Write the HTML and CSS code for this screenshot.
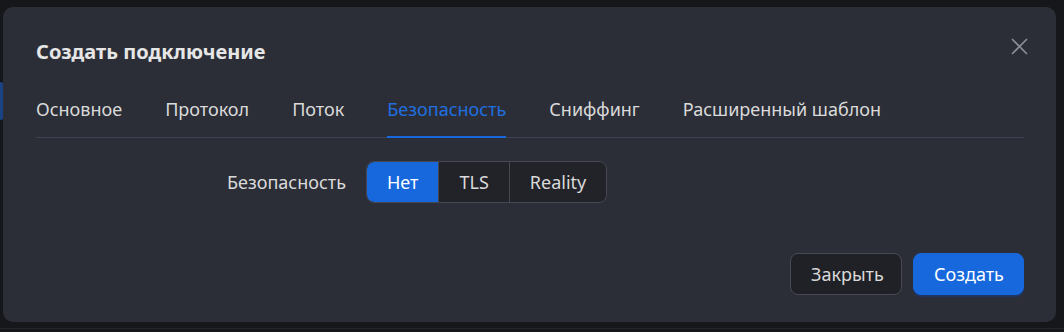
FILE: index.html
```html
<!DOCTYPE html>
<html lang="ru">
<head>
    <meta charset="UTF-8">
    <meta name="viewport" content="width=device-width, initial-scale=1.0">
    <title>Создать подключение</title>
    <link rel="stylesheet" href="styles.css">
</head>
<body>

    <div class="page-behind">
        <div class="side-pill"></div>
        <div class="bottom-line"></div>
    </div>

    <div class="modal">
        <div class="modal-header">
            <h2>Создать подключение</h2>
            <button class="close-btn" aria-label="Закрыть">
                <svg width="17" height="17" viewBox="0 0 17 17">
                    <path d="M1 1 L16 16 M16 1 L1 16" stroke="#8c8e96" stroke-width="1.6" fill="none"/>
                </svg>
            </button>
        </div>

        <div class="tabs">
            <div class="tab">Основное</div>
            <div class="tab">Протокол</div>
            <div class="tab">Поток</div>
            <div class="tab active">Безопасность</div>
            <div class="tab">Сниффинг</div>
            <div class="tab">Расширенный шаблон</div>
        </div>

        <div class="form-row">
            <label class="form-label">Безопасность</label>
            <div class="segmented">
                <div class="segment selected">Нет</div>
                <div class="segment">TLS</div>
                <div class="segment">Reality</div>
            </div>
        </div>

        <div class="modal-footer">
            <button class="btn btn-default">Закрыть</button>
            <button class="btn btn-primary">Создать</button>
        </div>
    </div>

</body>
</html>
```

FILE: styles.css
```css
* {
    margin: 0;
    padding: 0;
    box-sizing: border-box;
    font-family: 'Noto Sans', 'Open Sans', sans-serif;
}

body {
    background: #16171b;
    width: 1064px;
    height: 332px;
    overflow: hidden;
    position: relative;
}

.page-behind .side-pill {
    position: absolute;
    left: 0;
    top: 82px;
    width: 4px;
    height: 38px;
    background: #1a4384;
    border-radius: 0 4px 4px 0;
}

.page-behind .bottom-line {
    position: absolute;
    left: 0;
    right: 0;
    top: 328px;
    height: 1px;
    background: #24252b;
}

.modal {
    position: relative;
    margin: 7px 0 0 3px;
    width: 1053px;
    height: 315px;
    background: #2c2e37;
    border-radius: 10px;
    padding: 30px 32px 27px 33px;
    display: flex;
    flex-direction: column;
}

.modal-header {
    display: flex;
    align-items: center;
    justify-content: space-between;
    height: 28px;
}

.modal-header h2 {
    font-size: 20px;
    font-weight: 700;
    color: #e6e6e6;
}

.close-btn {
    background: none;
    border: none;
    cursor: pointer;
    display: flex;
    margin-right: -4px;
    margin-top: -10px;
}

.tabs {
    display: flex;
    gap: 43px;
    margin-top: 20px;
    border-bottom: 1px solid #3e4053;
}

.tab {
    font-size: 18px;
    color: #dadada;
    padding: 12px 0 15px;
    line-height: 24px;
    border-bottom: 2px solid transparent;
    margin-bottom: -1px;
    cursor: pointer;
}

.tab.active {
    color: #1f6fe0;
    border-bottom-color: #1668dc;
}

.form-row {
    display: flex;
    align-items: center;
    margin-top: 23px;
}

.form-label {
    width: 330px;
    padding-right: 20px;
    text-align: right;
    font-size: 18px;
    color: #dadada;
}

.segmented {
    display: flex;
    height: 42px;
    border: 1px solid #454753;
    border-radius: 8px;
    background: #222329;
    overflow: hidden;
}

.segment {
    display: flex;
    align-items: center;
    padding: 0 20px;
    font-size: 18px;
    color: #dadada;
    border-left: 1px solid #454753;
}

.segment:first-child {
    border-left: none;
}

.segment.selected {
    background: #1668dc;
    color: #ffffff;
    border-radius: 7px 0 0 7px;
}

.modal-footer {
    margin-top: auto;
    display: flex;
    justify-content: flex-end;
    gap: 11px;
}

.btn {
    height: 42px;
    padding: 0 20px;
    border-radius: 8px;
    font-size: 18px;
    cursor: pointer;
}

.btn-default {
    background: #202127;
    border: 1px solid #474954;
    color: #dadada;
    width: 112px;
}

.btn-primary {
    background: #1668dc;
    border: 1px solid #1668dc;
    color: #ffffff;
    width: 111px;
    box-shadow: 0 2px 0 rgba(20, 60, 140, 0.5);
}
```
